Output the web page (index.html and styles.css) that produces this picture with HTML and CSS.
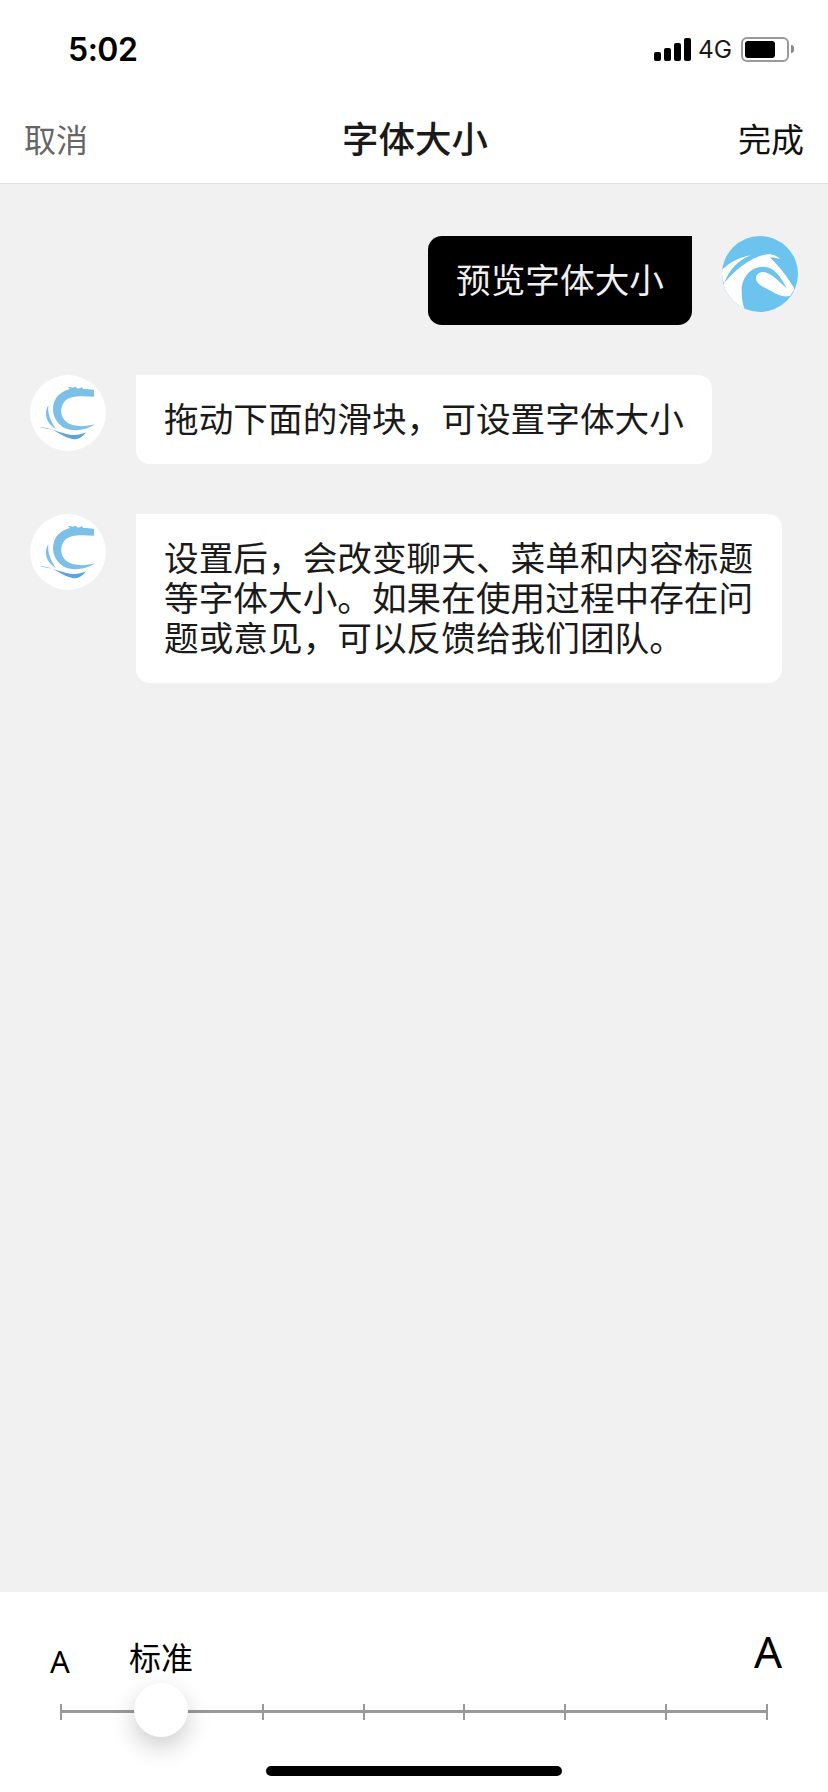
FILE: index.html
```html
<!DOCTYPE html>
<html lang="zh-CN">

<head>
    <meta charset="UTF-8">
    <meta name="viewport" content="width=device-width, initial-scale=1.0">
    <title>字体大小</title>
    <link rel="stylesheet" href="styles.css">
</head>

<body>
    <div class="status-bar">
        <span class="time">5:02</span>
        <div class="status-icons">
            <div class="signal">
                <span class="bar bar-1"></span>
                <span class="bar bar-2"></span>
                <span class="bar bar-3"></span>
                <span class="bar bar-4"></span>
            </div>
            <span class="network">4G</span>
            <div class="battery">
                <div class="battery-body"><div class="battery-level"></div></div>
                <div class="battery-nub"></div>
            </div>
        </div>
    </div>

    <div class="nav-bar">
        <span class="nav-cancel">取消</span>
        <span class="nav-title">字体大小</span>
        <span class="nav-done">完成</span>
    </div>

    <div class="chat">
        <div class="message message-self">
            <div class="bubble bubble-self">预览字体大小</div>
            <svg class="avatar" viewBox="66 48 228 228">
                <defs>
                    <clipPath id="horseClip"><circle cx="180" cy="162" r="114"/></clipPath>
                </defs>
                <circle cx="180" cy="162" r="114" fill="#6cc3ee"/>
                <g clip-path="url(#horseClip)" fill="#fff">
                    <path d="M60,155 C90,125 120,112 152,106 C115,122 90,145 72,190 C66,180 62,168 60,155 Z"/>
                    <path d="M60,205 C100,150 150,115 190,105 C210,100 230,105 240,118 C228,113 218,112 210,113 C240,140 265,175 284,207 L270,228 C250,232 235,226 215,214 C195,202 168,195 168,175 C168,160 185,152 200,158 C225,168 240,188 260,204 C242,170 222,140 190,140 C150,140 125,175 125,210 C125,235 128,255 134,268 L120,290 L60,290 Z"/>
                </g>
            </svg>
        </div>

        <div class="message">
            <svg class="avatar" viewBox="30 30 228 228">
                <circle cx="144" cy="144" r="114" fill="#fff"/>
                <path fill="#7cc0e8" d="M222,75 L222,95 C180,92 150,92 135,108 C118,128 120,155 140,172 C160,186 195,186 226,178 C195,198 155,202 128,186 C100,168 90,130 108,100 C116,88 128,78 150,72 L143,65 L160,68 L165,65 L175,71 L186,67 L190,72 C200,72 212,73 222,75 Z"/>
                <path fill="#7cc0e8" d="M85,120 C70,145 78,175 108,192 C92,170 82,145 85,120 Z"/>
                <path fill="#5aa6dc" d="M60,188 C100,184 120,215 160,223 C175,224 190,215 198,202 C180,210 165,212 150,209 C120,204 100,190 60,188 Z"/>
            </svg>
            <div class="bubble">拖动下面的滑块，可设置字体大小</div>
        </div>

        <div class="message">
            <svg class="avatar" viewBox="30 30 228 228">
                <circle cx="144" cy="144" r="114" fill="#fff"/>
                <path fill="#7cc0e8" d="M222,75 L222,95 C180,92 150,92 135,108 C118,128 120,155 140,172 C160,186 195,186 226,178 C195,198 155,202 128,186 C100,168 90,130 108,100 C116,88 128,78 150,72 L143,65 L160,68 L165,65 L175,71 L186,67 L190,72 C200,72 212,73 222,75 Z"/>
                <path fill="#7cc0e8" d="M85,120 C70,145 78,175 108,192 C92,170 82,145 85,120 Z"/>
                <path fill="#5aa6dc" d="M60,188 C100,184 120,215 160,223 C175,224 190,215 198,202 C180,210 165,212 150,209 C120,204 100,190 60,188 Z"/>
            </svg>
            <div class="bubble">设置后，会改变聊天、菜单和内容标题等字体大小。如果在使用过程中存在问题或意见，可以反馈给我们团队。</div>
        </div>
    </div>

    <div class="panel">
        <div class="scale-labels">
            <span class="label-small">A</span>
            <span class="label-current">标准</span>
            <span class="label-large">A</span>
        </div>
        <div class="slider">
            <span class="tick"></span>
            <span class="tick"></span>
            <span class="tick"></span>
            <span class="tick"></span>
            <span class="tick"></span>
            <span class="tick"></span>
            <span class="tick"></span>
            <span class="tick"></span>
            <span class="thumb"></span>
        </div>
        <div class="home-indicator"></div>
    </div>
</body>

</html>
```

FILE: styles.css
```css
* {
    box-sizing: border-box;
}

html,
body {
    height: 100%;
}

body {
    margin: 0;
    display: flex;
    flex-direction: column;
    background-color: #f1f1f1;
    color: #1a1a1a;
    font-family: "Noto Sans CJK SC", "Noto Sans", sans-serif;
}

/* status bar */
.status-bar {
    height: 92px;
    padding: 0 34px 0 68px;
    display: flex;
    justify-content: space-between;
    align-items: center;
    background-color: #fff;
    flex-shrink: 0;
}

.time {
    font-family: Inter, "Liberation Sans", sans-serif;
    font-size: 32px;
    font-weight: 600;
    letter-spacing: -0.5px;
    color: #000;
    margin-top: 6px;
}

.status-icons {
    display: flex;
    align-items: center;
    margin-top: 6px;
}

.signal {
    display: flex;
    align-items: flex-end;
    gap: 3px;
    height: 23px;
}

.bar {
    width: 7px;
    background-color: #000;
    border-radius: 2px;
}

.bar-1 {
    height: 9px;
}

.bar-2 {
    height: 13px;
}

.bar-3 {
    height: 18px;
}

.bar-4 {
    height: 23px;
}

.network {
    margin-left: 7px;
    font-family: Inter, "Liberation Sans", sans-serif;
    font-size: 24.5px;
    color: #1a1a1a;
}

.battery {
    margin-left: 9px;
    display: flex;
    align-items: center;
}

.battery-body {
    width: 48px;
    height: 25px;
    padding: 2px;
    border: 2px solid #9a9a9a;
    border-radius: 6px;
}

.battery-level {
    width: 30px;
    height: 100%;
    background-color: #000;
    border-radius: 3px;
}

.battery-nub {
    width: 3px;
    height: 8px;
    margin-left: 2px;
    background-color: #8a8a8a;
    border-radius: 0 3px 3px 0;
}

/* nav */
.nav-bar {
    height: 92px;
    padding: 0 24px 0 24px;
    display: flex;
    justify-content: space-between;
    align-items: center;
    background-color: #fff;
    border-bottom: 1px solid #e2e2e2;
    flex-shrink: 0;
}

.nav-cancel {
    font-size: 32px;
    color: #666;
}

.nav-title {
    font-size: 36.5px;
    font-weight: 500;
    margin-left: 4px;
}

.nav-done {
    font-size: 33px;
    color: #111;
}

/* chat */
.chat {
    flex: 1;
    padding: 52px 30px 0;
    display: flex;
    flex-direction: column;
    gap: 50px;
}

.message {
    display: flex;
    align-items: flex-start;
    gap: 30px;
}

.message-self {
    justify-content: flex-end;
}

.avatar {
    width: 76px;
    height: 76px;
    flex-shrink: 0;
}

.bubble {
    padding: 22px 28px 27px;
    background-color: #fff;
    border-radius: 0 14px 14px 14px;
    font-size: 34.67px;
    line-height: 40px;
    color: #1a1a1a;
    max-width: 646px;
}

.bubble-self {
    background-color: #000;
    color: #f0f0f0;
    border-radius: 14px 0 14px 14px;
}

/* bottom panel */
.panel {
    height: 200px;
    padding: 0 60px;
    background-color: #fff;
    position: relative;
    flex-shrink: 0;
}

.scale-labels {
    height: 100px;
    display: flex;
    align-items: flex-end;
    color: #000;
}

.label-small {
    margin-left: -10px;
    width: 79px;
    font-family: "Noto Sans", sans-serif;
    font-size: 31px;
    line-height: 34px;
    padding-bottom: 14px;
}

.label-current {
    font-size: 32px;
    line-height: 40px;
    padding-bottom: 16px;
}

.label-large {
    margin-left: auto;
    margin-right: -14px;
    font-family: "Noto Sans", sans-serif;
    font-size: 44px;
    line-height: 50px;
    padding-bottom: 16px;
}

.slider {
    height: 16px;
    margin-top: 12px;
    display: flex;
    justify-content: space-between;
    position: relative;
}

/* the line behind the ticks */
.slider::before {
    content: "";
    position: absolute;
    left: 0;
    right: 0;
    top: 6px;
    height: 3px;
    background-color: #999;
}

.tick {
    width: 2px;
    height: 16px;
    background-color: #999;
}

.thumb {
    position: absolute;
    left: 74px;
    top: -21px;
    width: 54px;
    height: 54px;
    border-radius: 50%;
    background-color: #fff;
    box-shadow: 0 10px 24px rgba(0, 0, 0, 0.2);
}

.home-indicator {
    position: absolute;
    left: 266px;
    bottom: 16px;
    width: 296px;
    height: 10px;
    border-radius: 5px;
    background-color: #000;
}
```
